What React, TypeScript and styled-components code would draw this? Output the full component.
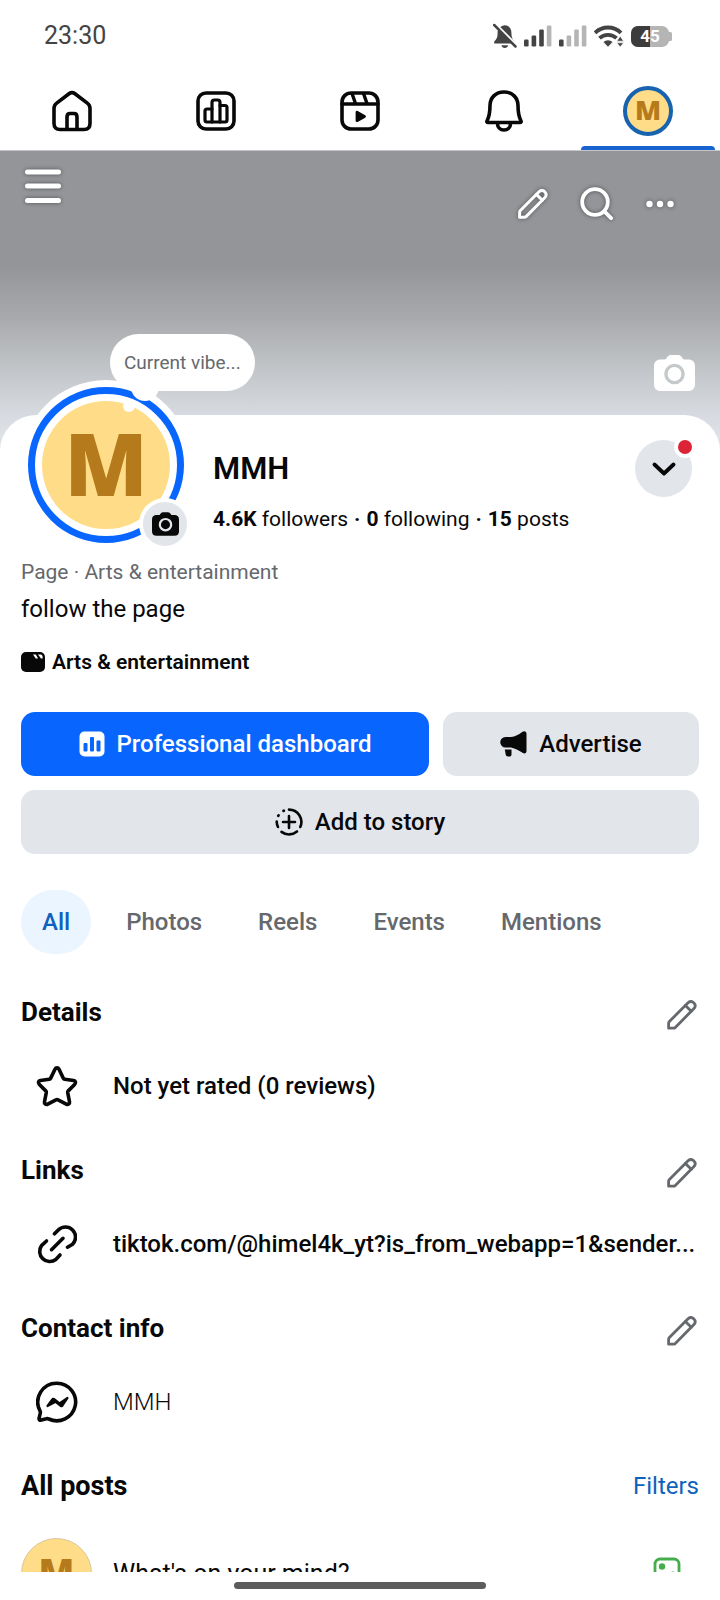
import React from "react";
import styled, { createGlobalStyle, css } from "styled-components";

const GlobalStyle = createGlobalStyle`
  * { box-sizing: border-box; }
  body {
    margin: 0;
    background: #fff;
    color: #080809;
    font-family: Roboto, "Noto Sans", sans-serif;
  }
  button { font: inherit; color: inherit; border: 0; padding: 0; background: none; cursor: pointer; }
  a { color: inherit; text-decoration: none; }
  h1, h2, p { margin: 0; }
  svg { display: block; flex: none; }
`;

const Screen = styled.div`
  height: 100vh;
  display: flex;
  flex-direction: column;
`;

const StatusBar = styled.header`
  flex: none;
  height: 72px;
  padding: 0 48px 0 44px;
  display: flex;
  align-items: center;
  justify-content: space-between;
  color: #444;
`;

const Clock = styled.time`
  font-size: 25px;
  line-height: 32px;
`;

const StatusIcons = styled.div`
  display: flex;
  align-items: center;
  gap: 7px;
`;

const Battery = styled.span`
  position: relative;
  width: 41px;
  height: 21px;
`;

const BatteryLevel = styled.span`
  position: absolute;
  inset: 0 3px 0 0;
  text-align: center;
  font-size: 17px;
  font-weight: 700;
  line-height: 21px;
  color: #fff;
`;

const NavBar = styled.nav`
  flex: none;
  display: grid;
  grid-template-columns: repeat(5, 1fr);
  height: 79px;
  border-bottom: 1px solid #c4c5c8;
`;

const NavItem = styled.a<{ $active?: boolean }>`
  position: relative;
  display: flex;
  align-items: center;
  justify-content: center;
  ${(p) =>
    p.$active &&
    css`
      &::after {
        content: "";
        position: absolute;
        left: 5px;
        right: 5px;
        bottom: 0;
        height: 4px;
        border-radius: 4px 4px 0 0;
        background: #1763cf;
      }
    `}
`;

const Monogram = styled.span<{ $size: number; $font: number; $border?: string }>`
  flex: none;
  width: ${(p) => p.$size}px;
  height: ${(p) => p.$size}px;
  padding-bottom: 4px;
  border-radius: 50%;
  border: ${(p) => p.$border ?? "0"};
  background: #ffdc87;
  color: #b57a1b;
  display: flex;
  align-items: center;
  justify-content: center;
  font-family: "Open Sans", "Noto Sans", sans-serif;
  font-weight: 800;
  font-size: ${(p) => p.$font}px;
  line-height: 1;
`;

const Feed = styled.main`
  flex: 1;
  min-height: 0;
  overflow: hidden;
`;

const Cover = styled.section`
  height: 300px;
  padding: 14px 25px 60px 24px;
  display: flex;
  flex-direction: column;
  justify-content: space-between;
  background: linear-gradient(#939598 0, #939598 115px, #a9aaae 168px, #c0c3c6 214px, #d7dae0 264px, #e3e6ea 300px);
  color: #fff;
`;

const CoverTools = styled.div`
  display: flex;
  justify-content: space-between;
  align-items: flex-start;
  filter: drop-shadow(0 0 2px rgba(0, 0, 0, 0.45));
`;

const ToolGroup = styled.div`
  display: flex;
  align-items: center;
  gap: 32px;
  padding: 22px 21px 0 0;
`;

const IconButton = styled.button<{ $muted?: boolean }>`
  display: flex;
  align-items: center;
  justify-content: center;
  color: ${(p) => (p.$muted ? "#65686c" : "inherit")};
`;

const CoverCamera = styled(IconButton)`
  align-self: flex-end;
`;

const EditButton = styled(IconButton)`
  align-self: flex-end;
`;

const Sheet = styled.div`
  position: relative;
  margin-top: -36px;
  padding: 0 21px;
  border-radius: 36px 36px 0 0;
  background: #fff;
`;

const ProfileHeader = styled.section`
  display: flex;
  gap: 22px;
`;

const AvatarWrap = styled.div`
  position: relative;
  flex: none;
  width: 170px;
  height: 170px;
  margin-top: -35px;
  padding: 7px;
  border-radius: 50%;
  background: #fff;
`;

const AvatarRing = styled.div`
  padding: 7px;
  border: 7px solid #0866ff;
  border-radius: 50%;
`;

const AvatarCamera = styled.button`
  position: absolute;
  right: 0;
  bottom: 0;
  width: 52px;
  height: 52px;
  border: 4px solid #fff;
  border-radius: 50%;
  background: #e2e5e9;
  display: flex;
  align-items: center;
  justify-content: center;
`;

const VibeBubble = styled.button`
  position: absolute;
  left: 89px;
  bottom: 159px;
  height: 57px;
  padding: 0 14px;
  border-radius: 29px;
  background: #fff;
  color: #65686c;
  font-size: 19px;
  line-height: 28px;
  white-space: nowrap;
  &::before {
    content: "";
    position: absolute;
    left: 21px;
    bottom: -10px;
    width: 28px;
    height: 28px;
    border-radius: 50%;
    background: #fff;
  }
  &::after {
    content: "";
    position: absolute;
    left: 13px;
    bottom: -21px;
    width: 12px;
    height: 12px;
    border-radius: 50%;
    background: #fff;
  }
`;

const VibeText = styled.span`
  position: relative;
  z-index: 1;
`;

const Identity = styled.div`
  flex: 1;
  min-width: 0;
  padding-top: 25px;
`;

const NameRow = styled.div`
  display: flex;
  align-items: center;
  justify-content: space-between;
  padding-right: 7px;
`;

const Name = styled.h1`
  font-size: 31px;
  line-height: 36px;
  font-weight: 600;
`;

const ExpandButton = styled.button`
  position: relative;
  width: 57px;
  height: 57px;
  border-radius: 50%;
  background: #e2e5e9;
  display: flex;
  align-items: center;
  justify-content: center;
`;

const Dot = styled.span`
  position: absolute;
  top: -4px;
  right: -4px;
  width: 22px;
  height: 22px;
  border: 4px solid #fff;
  border-radius: 50%;
  background: #dc2436;
`;

const Stats = styled.p`
  margin-top: 8px;
  display: flex;
  gap: 6px;
  font-size: 21px;
  line-height: 28px;
`;

const Meta = styled.p`
  margin-top: 8px;
  font-size: 21px;
  line-height: 28px;
  color: #65686c;
`;

const Bio = styled.p`
  margin-top: 7px;
  font-size: 24px;
  line-height: 32px;
`;

const Category = styled.p`
  margin-top: 23px;
  display: flex;
  align-items: center;
  gap: 7px;
  font-size: 21px;
  line-height: 28px;
  font-weight: 600;
`;

const Actions = styled.div`
  margin-top: 36px;
  display: grid;
  grid-template-columns: 408fr 256fr;
  gap: 14px;
`;

const ActionButton = styled.button<{ $primary?: boolean; $wide?: boolean }>`
  height: 64px;
  border-radius: 14px;
  display: flex;
  align-items: center;
  justify-content: center;
  gap: 12px;
  font-size: 24px;
  line-height: 32px;
  font-weight: 500;
  background: ${(p) => (p.$primary ? "#0866ff" : "#e2e5e9")};
  color: ${(p) => (p.$primary ? "#fff" : "#080809")};
  grid-column: ${(p) => (p.$wide ? "1 / -1" : "auto")};
`;

const Tabs = styled.div`
  margin: 36px 0 40px;
  display: flex;
  gap: 14px;
`;

const Tab = styled.button<{ $active?: boolean }>`
  height: 64px;
  padding: 0 21px;
  border-radius: 32px;
  font-size: 24px;
  line-height: 32px;
  font-weight: 500;
  color: ${(p) => (p.$active ? "#0d62bd" : "#65686c")};
  background: ${(p) => (p.$active ? "#ebf5ff" : "transparent")};
`;

const Section = styled.section`
  margin-bottom: 31px;
`;

const SectionHead = styled.div`
  display: flex;
  align-items: center;
  justify-content: space-between;
  height: 36px;
  padding-right: 2px;
`;

const SectionTitle = styled.h2<{ $large?: boolean }>`
  font-size: ${(p) => (p.$large ? 27 : 26)}px;
  line-height: 36px;
  font-weight: 700;
`;

const Row = styled.div`
  display: flex;
  align-items: center;
  gap: 21px;
  height: 70px;
  margin-top: 21px;
`;

const RowIcon = styled.span`
  flex: none;
  width: 71px;
  display: flex;
  justify-content: center;
`;

const RowText = styled.span<{ $thin?: boolean }>`
  flex: 1;
  min-width: 0;
  font-size: 24px;
  line-height: 32px;
  font-weight: ${(p) => (p.$thin ? 300 : 500)};
  white-space: nowrap;
`;

const FiltersLink = styled.a`
  margin-right: -2px;
  font-size: 24px;
  line-height: 32px;
  color: #0d62bd;
`;

const Composer = styled(Row)`
  height: 71px;
  margin-top: 34px;
`;

const ComposerPrompt = styled.button`
  flex: 1;
  text-align: left;
  font-size: 25px;
  line-height: 32px;
`;

const PhotoButton = styled(IconButton)`
  padding-right: 18px;
`;

const GestureBar = styled.footer`
  flex: none;
  height: 28px;
  padding-top: 10px;
  display: flex;
  justify-content: center;
  background: #fff;
  &::after {
    content: "";
    width: 35%;
    height: 7px;
    border-radius: 4px;
    background: #5c5c5c;
  }
`;

const line = {
  fill: "none",
  stroke: "currentColor",
  strokeLinecap: "round" as const,
  strokeLinejoin: "round" as const,
};

const MutedBell = () => (
  <svg width="24" height="26" viewBox="0 0 24 26" aria-hidden="true">
    <path d="M11 2.4c4.4-.6 7.4 3 7.4 7 0 4 .6 6.6 3 9v2H1.200v-2c3-2.600 3.400-5 3.400-9 0-3 2-6.400 6.400-7z" fill="#444" />
    <path d="M8.500 22.200h6.500a3.300 3.300 0 0 1-6.500 0z" fill="#444" />
    <path d="M2 .5 24 22.500" stroke="#fff" strokeWidth="2.500" />
    <path d="M1.200 2 22.500 23.500" stroke="#444" strokeWidth="2.500" strokeLinecap="round" />
  </svg>
);

const Signal = ({ level }: { level: number }) => (
  <svg width="28" height="22" viewBox="0 0 28 22" aria-hidden="true">
    {[7, 11, 17, 21].map((h, i) => (
      <rect key={h} x={i * 7.6} y={21.5 - h} width="4.600" height={h} rx="1.200" fill={i < level ? "#444" : "#b5b5b5"} />
    ))}
  </svg>
);

const Wifi = () => (
  <svg width="30" height="22" viewBox="0 0 30 22" aria-hidden="true">
    <g fill="none" stroke="#444" strokeWidth="3.800">
      <path d="M1 7.800a18.600 18.600 0 0 1 26 0" />
      <path d="M5.500 13.200a12.400 12.400 0 0 1 17 0" />
    </g>
    <path d="M9.500 17a6.500 6.500 0 0 1 9 0L14 21.800z" fill="#444" />
    <path d="M22.800 16.200l3.400-5 3.400 5zM22.800 17.800l3.400 4.200 3.400-4.200z" fill="#444" stroke="#fff" strokeWidth=".6" />
  </svg>
);

const BatteryShape = () => (
  <svg width="41" height="21" viewBox="0 0 41 21" aria-hidden="true">
    <path d="M7 0h24a7 7 0 0 1 7 6h1.500a1.500 1.500 0 0 1 1.500 1.500v6a1.500 1.500 0 0 1-1.500 1.500H38a7 7 0 0 1-7 6H7a7 7 0 0 1-7-7V7a7 7 0 0 1 7-7z" fill="#b5b5b5" />
    <path d="M7 0h12v21H7a7 7 0 0 1-7-7V7a7 7 0 0 1 7-7z" fill="#3c3c3c" />
  </svg>
);

const HomeIcon = () => (
  <svg width="40" height="42" viewBox="0 0 40 42" {...line} strokeWidth="3.600" aria-hidden="true">
    <path d="M2 18.500c0-2.500 1-4.200 3-5.600L17 3.700c2-1.400 4-1.400 6 0l12 9.200c2 1.400 3 3.100 3 5.600V33.500c0 4-2.200 6-6 6H8c-3.800 0-6-2-6-6z" />
    <path d="M15 39V27c0-2.300 1-3.500 3-3.500h4c2 0 3 1.200 3 3.500v12" />
  </svg>
);

const ChartIcon = () => (
  <svg width="40" height="40" viewBox="0 0 40 40" {...line} strokeWidth="3.600" aria-hidden="true">
    <rect x="2" y="2" width="36" height="36" rx="8" />
    <g strokeWidth="3.200">
      <path d="M16 31V11.500c0-1.700.8-2.500 2.500-2.500h3c1.700 0 2.500.8 2.500 2.500V31" />
      <path d="M16 18h-5c-1.300 0-2 .7-2 2v9c0 1.300.7 2 2 2h18c1.300 0 2-.7 2-2V16.500c0-1.300-.7-2-2-2h-5" />
    </g>
  </svg>
);

const ReelsIcon = () => (
  <svg width="40" height="40" viewBox="0 0 40 40" {...line} strokeWidth="3.600" aria-hidden="true">
    <rect x="2" y="2" width="36" height="36" rx="9" />
    <path d="M2 13h36M12 2.500l3.500 10M23.500 2.500l3.500 10" strokeWidth="3.400" />
    <path d="M17 21.300v8.400l7.500-4.200z" fill="currentColor" strokeWidth="2.800" />
  </svg>
);

const BellIcon = () => (
  <svg width="38" height="42" viewBox="0 0 38 42" {...line} strokeWidth="3.600" aria-hidden="true">
    <path d="M19 2c8.400 0 14 5.800 14 13.500 0 8 .7 11 3 15.500.4.900 0 1.500-1 1.500H3c-1 0-1.400-.6-1-1.500 2.300-4.500 3-7.500 3-15.500C5 7.800 10.600 2 19 2z" />
    <path d="M12.500 33.500c0 4 2.800 6.500 6.500 6.500s6.500-2.500 6.500-6.500" />
  </svg>
);

const MenuIcon = () => (
  <svg width="38" height="42" viewBox="0 0 38 42" {...line} strokeWidth="5" aria-hidden="true">
    <path d="M3.500 7h31M3.500 21h31M3.500 35.500h31" />
  </svg>
);

const PencilIcon = ({ weight = 2.8 }: { weight?: number }) => (
  <svg width="30" height="30" viewBox="0 0 30 30" {...line} strokeWidth={weight} aria-hidden="true">
    <path d="M1.600 23.400c0-.8.300-1.400.8-1.900L20.800 3c2-2 4-2 5.900-.300 2 2 2 4.100 0 6.100L8.300 27.400c-.5.500-1.200.8-2 .8H1.600z" />
    <path d="M18.400 5.400l5.900 5.900" />
  </svg>
);

const SearchIcon = () => (
  <svg width="34" height="34" viewBox="0 0 34 34" {...line} strokeWidth="3.800" aria-hidden="true">
    <circle cx="15" cy="15" r="12.800" />
    <path d="M24.600 24.600l6.500 6.500" />
  </svg>
);

const MoreIcon = () => (
  <svg width="28" height="8" viewBox="0 0 28 8" fill="currentColor" aria-hidden="true">
    <circle cx="3.500" cy="4" r="3.200" />
    <circle cx="14" cy="4" r="3.200" />
    <circle cx="24.500" cy="4" r="3.200" />
  </svg>
);

const CameraIcon = ({ width, lens }: { width: number; lens: string }) => (
  <svg width={width} height={Math.round((width * 36) / 41)} viewBox="0 0 41 36" aria-hidden="true">
    <path d="M7 4.500h3.500c1.500 0 1.800-1.500 3-2.800C14.500.6 15.600 0 17 0h7c1.400 0 2.500.6 3.500 1.700 1.200 1.300 1.500 2.800 3 2.800H34c4.600 0 7 2.400 7 7V29c0 4.600-2.400 7-7 7H7c-4.600 0-7-2.400-7-7V11.500c0-4.600 2.400-7 7-7z" fill="currentColor" />
    <circle cx="20.500" cy="19" r="8.600" fill="none" stroke={lens} strokeWidth="3.400" />
  </svg>
);

const ChevronIcon = () => (
  <svg width="24" height="14" viewBox="0 0 24 14" {...line} strokeWidth="3.800" aria-hidden="true">
    <path d="M2.500 2.500L12 11.500l9.500-9" />
  </svg>
);

const ClapperIcon = () => (
  <svg width="24" height="20" viewBox="0 0 24 20" aria-hidden="true">
    <rect width="24" height="20" rx="5" fill="currentColor" />
    <path d="M12 2.500h2.800l2.200 4h-2.200zM17 2.500h2.800c1 .3 1.600 1 1.800 2v2H20z" fill="#fff" />
  </svg>
);

const DashboardIcon = () => (
  <svg width="26" height="26" viewBox="0 0 26 26" aria-hidden="true">
    <rect x=".5" y=".5" width="25" height="25" rx="5" fill="#fff" />
    <g fill="#0866ff">
      <rect x="4.500" y="12" width="4" height="8.500" rx="1" />
      <rect x="11" y="6" width="4" height="14.500" rx="1" />
      <rect x="17.500" y="9.500" width="4" height="11" rx="1" />
    </g>
  </svg>
);

const MegaphoneIcon = () => (
  <svg width="27" height="26" viewBox="0 0 27 26" fill="currentColor" aria-hidden="true">
    <path d="M5.500 6H11c4 0 8-2.600 11.500-5.200C24.500-.5 26.500.3 26.500 3v17c0 2.300-1.800 3-4 1.800-3.200-2-7-4.300-11.500-5.300H5.500a5.250 5.250 0 0 1 0-10.500z" />
    <path d="M4.800 18.500h6.700v4.700c0 1.500-.8 2.300-2.300 2.300H8c-1.400 0-2-.7-2.300-2z" />
  </svg>
);

const StoryIcon = () => (
  <svg width="28" height="28" viewBox="0 0 28 28" {...line} strokeWidth="2.600" aria-hidden="true">
    <path d="M14 1.600A12.400 12.400 0 0 1 25.300 19" />
    <path d="M22 23.500a12.400 12.400 0 0 1-15.500.400" />
    <path d="M3 19a12.400 12.400 0 0 1-1.300-5.500" />
    <path d="M3.300 7.800l.2-.3M8.500 2.900l.3-.1" strokeWidth="2.800" />
    <path d="M14 8v12M8 14h12" />
  </svg>
);

const StarIcon = () => (
  <svg width="42" height="42" viewBox="0 0 44 44" {...line} strokeWidth="3.800" aria-hidden="true">
    <path d="M19.900 4.400c.9-1.900 3.300-1.900 4.200 0l4.500 9.400c.3.600.8 1 1.500 1.100l9.300 1.300c2 .3 2.700 2.500 1.300 3.900l-6.900 7c-.5.500-.7 1.100-.6 1.700l1.900 9.700c.4 2-1.600 3.400-3.400 2.500l-8.600-4.500c-.7-.4-1.500-.4-2.200 0L12.300 41c-1.800.9-3.800-.5-3.400-2.500l1.900-9.700c.1-.6-.1-1.200-.6-1.700l-6.900-7c-1.400-1.400-.7-3.600 1.300-3.900l9.300-1.300c.7-.1 1.200-.5 1.500-1.100z" />
  </svg>
);

const LinkIcon = () => (
  <svg width="40" height="40" viewBox="0 0 40 40" {...line} strokeWidth="3.600" aria-hidden="true">
    <path d="M17.500 9.800l3.800-3.900a10.100 10.100 0 0 1 14.300 14.300l-5.100 3" />
    <path d="M9.500 17l-5 4.600A10.100 10.100 0 0 0 18.800 35.500l4.200-4.500" />
    <path d="M14.500 25.700l11.500-11.400" />
  </svg>
);

const MessengerIcon = () => (
  <svg width="42" height="42" viewBox="0 0 42 42" {...line} strokeWidth="3.600" aria-hidden="true">
    <path d="M21 2.200a18.800 18.800 0 1 1-8.200 35.800c-.9-.4-1.600-.5-2.500-.2l-5 1.300c-1.600.4-2.500-.5-2.200-2l1.200-5c.2-.8.100-1.500-.3-2.300A18.800 18.800 0 0 1 21 2.200z" />
    <path d="M11.500 25l4.800-6.700c.4-.6 1-.7 1.600-.300l5 3.800c.4.300.9.300 1.300 0L31.500 17l-5 7.500c-.5.700-1.200.8-1.800.3l-4.800-3.600c-.4-.3-.9-.3-1.300 0z" fill="currentColor" strokeWidth="2.200" />
  </svg>
);

const PhotoIcon = () => (
  <svg width="28" height="34" viewBox="0 0 28 34" {...line} strokeWidth="2.800" color="#45ad4d" aria-hidden="true">
    <rect x="2" y="2" width="24" height="30" rx="5" />
    <circle cx="9" cy="9.500" r="3.200" fill="currentColor" stroke="none" />
    <path d="M3 27l7-6 5 4" />
    <circle cx="20" cy="19" r="3.500" strokeWidth="2" />
  </svg>
);

const details = [
  { title: "Details", icon: <StarIcon />, text: "Not yet rated (0 reviews)" },
  { title: "Links", icon: <LinkIcon />, text: "tiktok.com/@himel4k_yt?is_from_webapp=1&sender...", href: "#tiktok" },
  { title: "Contact info", icon: <MessengerIcon />, text: "MMH", thin: true },
];

const tabs = ["All", "Photos", "Reels", "Events", "Mentions"];

export default function App() {
  return (
    <Screen>
      <GlobalStyle />
      <StatusBar>
        <Clock>23:30</Clock>
        <StatusIcons>
          <MutedBell />
          <Signal level={3} />
          <Signal level={1} />
          <Wifi />
          <Battery>
            <BatteryShape />
            <BatteryLevel>45</BatteryLevel>
          </Battery>
        </StatusIcons>
      </StatusBar>

      <NavBar aria-label="Main">
        <NavItem href="#home" aria-label="Home"><HomeIcon /></NavItem>
        <NavItem href="#dashboard" aria-label="Dashboard"><ChartIcon /></NavItem>
        <NavItem href="#reels" aria-label="Reels"><ReelsIcon /></NavItem>
        <NavItem href="#notifications" aria-label="Notifications"><BellIcon /></NavItem>
        <NavItem href="#profile" aria-label="Profile" $active>
          <Monogram $size={50} $font={27} $border="4px solid #1763b0">M</Monogram>
        </NavItem>
      </NavBar>

      <Feed>
        <Cover>
          <CoverTools>
            <IconButton aria-label="Menu"><MenuIcon /></IconButton>
            <ToolGroup>
              <IconButton aria-label="Edit profile"><PencilIcon weight={3} /></IconButton>
              <IconButton aria-label="Search"><SearchIcon /></IconButton>
              <IconButton aria-label="More options"><MoreIcon /></IconButton>
            </ToolGroup>
          </CoverTools>
          <CoverCamera aria-label="Change cover photo"><CameraIcon width={41} lens="#c6c9cb" /></CoverCamera>
        </Cover>

        <Sheet>
          <ProfileHeader>
            <AvatarWrap>
              <AvatarRing>
                <Monogram $size={128} $font={86}>M</Monogram>
              </AvatarRing>
              <VibeBubble><VibeText>Current vibe...</VibeText></VibeBubble>
              <AvatarCamera aria-label="Change profile photo"><CameraIcon width={27} lens="#e2e5e9" /></AvatarCamera>
            </AvatarWrap>
            <Identity>
              <NameRow>
                <Name>MMH</Name>
                <ExpandButton aria-label="Switch profile">
                  <ChevronIcon />
                  <Dot />
                </ExpandButton>
              </NameRow>
              <Stats>
                <span><b>4.6K</b> followers</span>
                <b>·</b>
                <span><b>0</b> following</span>
                <b>·</b>
                <span><b>15</b> posts</span>
              </Stats>
            </Identity>
          </ProfileHeader>

          <Meta>Page · Arts &amp; entertainment</Meta>
          <Bio>follow the page</Bio>
          <Category><ClapperIcon />Arts &amp; entertainment</Category>

          <Actions>
            <ActionButton $primary><DashboardIcon />Professional dashboard</ActionButton>
            <ActionButton><MegaphoneIcon />Advertise</ActionButton>
            <ActionButton $wide><StoryIcon />Add to story</ActionButton>
          </Actions>

          <Tabs role="tablist">
            {tabs.map((t, i) => (
              <Tab key={t} role="tab" aria-selected={i === 0} $active={i === 0}>{t}</Tab>
            ))}
          </Tabs>

          {details.map((d) => (
            <Section key={d.title}>
              <SectionHead>
                <SectionTitle>{d.title}</SectionTitle>
                <EditButton $muted aria-label={`Edit ${d.title}`}><PencilIcon /></EditButton>
              </SectionHead>
              <Row>
                <RowIcon>{d.icon}</RowIcon>
                <RowText $thin={d.thin}>{d.href ? <a href={d.href}>{d.text}</a> : d.text}</RowText>
              </Row>
            </Section>
          ))}

          <SectionHead>
            <SectionTitle $large>All posts</SectionTitle>
            <FiltersLink href="#filters">Filters</FiltersLink>
          </SectionHead>
          <Composer>
            <Monogram $size={71} $font={37} $border="1px solid #d9c79c">M</Monogram>
            <ComposerPrompt>What's on your mind?</ComposerPrompt>
            <PhotoButton aria-label="Add photo"><PhotoIcon /></PhotoButton>
          </Composer>
        </Sheet>
      </Feed>
      <GestureBar />
    </Screen>
  );
}
